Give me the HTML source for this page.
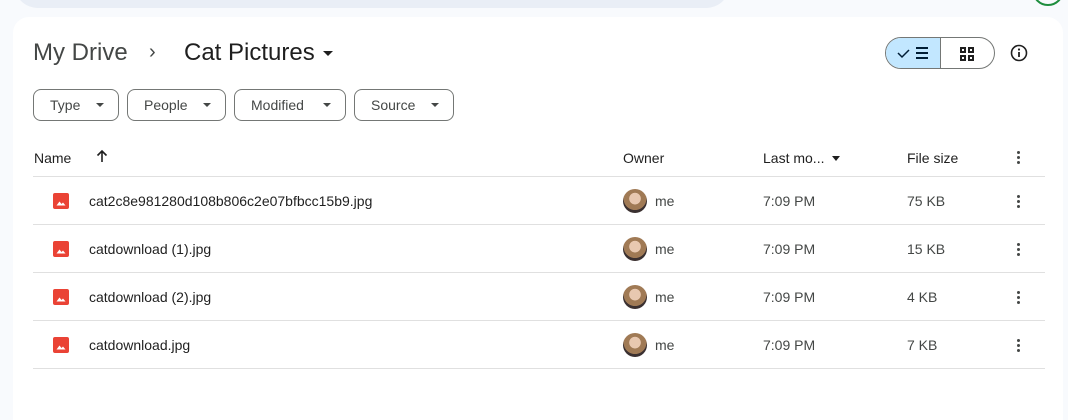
<!DOCTYPE html>
<html><head><style>
*{margin:0;padding:0;box-sizing:border-box}
html,body{width:1068px;height:420px;overflow:hidden}
body{background:#f8fafd;font-family:"Liberation Sans",Arial,sans-serif;position:relative;color:#1f1f1f}
.search{position:absolute;left:14px;top:-30px;width:716px;height:38px;background:#e9eef6;border-radius:0 0 24px 24px}
.av{position:absolute;left:1032px;top:-26px;width:32px;height:32px;border:2px solid #1e8e3e;border-radius:50%}
.card{position:absolute;left:13px;top:17px;width:1050px;height:420px;background:#fff;border-radius:16px}
.a{position:absolute}
.crumb{top:39px;font-size:24px;line-height:28px}
.chip{top:89px;height:32px;border:1px solid #747775;border-radius:8px;font-size:14px;color:#444746;line-height:30px;padding-left:16px}
.chip:after{content:"";position:absolute;right:14px;top:13px;border:4px solid transparent;border-top:4px solid #444746;border-bottom:0}
.hd{top:150px;font-size:14px;color:#1f1f1f}
.line{left:33px;width:1012px;height:1px;background:#e0e0e0}
.fn{font-size:14px;color:#1f1f1f}
.sm{font-size:14px;color:#444746}
.ow{width:24px;height:24px;border-radius:50%;background:radial-gradient(circle at 50% 40%,#e8c8b0 0 30%,#a07a55 32% 60%,#3a3030 62%)}
.dots{width:4px}
.dots i{display:block;width:3px;height:3px;background:#444746;border-radius:50%;margin-bottom:2px}
</style></head><body>
<div class="search"></div><div class="av"></div>
<div class="card"></div>
<div class="a crumb" style="left:33px;color:#444746">My Drive</div>
<div class="a" style="left:149px;top:41px;font-size:20px;color:#444746">›</div>
<div class="a crumb" style="left:184px">Cat Pictures</div>
<div class="a" style="left:323px;top:51px;border:5px solid transparent;border-top:5px solid #1f1f1f;border-bottom:0"></div>
<div class="a" style="left:885px;top:37px;width:110px;height:32px;border:1px solid #747775;border-radius:16px;overflow:hidden">
 <div style="position:absolute;left:0;top:0;width:55px;height:30px;background:#c2e7ff;border-right:1px solid #747775"></div>
 <svg style="position:absolute;left:10px;top:7px" width="36" height="16" viewBox="0 0 36 16"><path d="M2 8l4 4 7-7" fill="none" stroke="#001d35" stroke-width="1.5"/><path d="M20 3h12M20 8h12M20 13h12" stroke="#001d35" stroke-width="2"/></svg>
 <svg style="position:absolute;left:74px;top:9px" width="14" height="14" viewBox="0 0 14 14" fill="#1f1f1f"><rect x="0" y="0" width="6" height="6"/><rect x="8" y="0" width="6" height="6"/><rect x="0" y="8" width="6" height="6"/><rect x="8" y="8" width="6" height="6"/><g fill="#fff"><rect x="2" y="2" width="2" height="2"/><rect x="10" y="2" width="2" height="2"/><rect x="2" y="10" width="2" height="2"/><rect x="10" y="10" width="2" height="2"/></g></svg>
</div>
<svg class="a" style="left:1010px;top:44px" width="18" height="18" viewBox="0 0 18 18"><circle cx="9" cy="9" r="7.5" fill="none" stroke="#1f1f1f" stroke-width="1.6"/><path d="M9 8v5" stroke="#1f1f1f" stroke-width="1.8"/><circle cx="9" cy="5.5" r="1.1" fill="#1f1f1f"/></svg>
<div class="a chip" style="left:33px;width:86px">Type</div>
<div class="a chip" style="left:127px;width:99px">People</div>
<div class="a chip" style="left:234px;width:112px">Modified</div>
<div class="a chip" style="left:354px;width:100px">Source</div>
<div class="a hd" style="left:34px">Name</div>
<svg class="a" style="left:95px;top:149px" width="14" height="14" viewBox="0 0 14 14"><path d="M7 13V2M2.5 6.5L7 2l4.5 4.5" fill="none" stroke="#1f1f1f" stroke-width="1.6"/></svg>
<div class="a hd" style="left:623px">Owner</div>
<div class="a hd" style="left:763px">Last mo...</div>
<div class="a" style="left:832px;top:156px;border:4px solid transparent;border-top:5px solid #1f1f1f;border-bottom:0"></div>
<div class="a hd" style="left:907px">File size</div>
<div class="a dots" style="left:1017px;top:151px"><i></i><i></i><i></i></div>
<div class="a line" style="top:176px"></div>

<svg width="0" height="0" style="position:absolute"><defs><symbol id="img" viewBox="0 0 16 16"><rect width="16" height="16" rx="2" fill="#ea4335"/><path d="M3.5 12.5L6.5 8.5 8.5 11 10 9.5 12.5 12.5z" fill="#fff"/></symbol></defs></svg>

<svg class="a" style="left:53px;top:193px" width="16" height="16"><use href="#img"/></svg><div class="a fn" style="left:89px;top:193px">cat2c8e981280d108b806c2e07bfbcc15b9.jpg</div>
<div class="a ow" style="left:623px;top:189px"></div><div class="a sm" style="left:655px;top:193px">me</div>
<div class="a sm" style="left:763px;top:193px">7:09 PM</div><div class="a sm" style="left:907px;top:193px">75 KB</div>
<div class="a dots" style="left:1017px;top:195px"><i></i><i></i><i></i></div>
<div class="a line" style="top:224px"></div>

<svg class="a" style="left:53px;top:241px" width="16" height="16"><use href="#img"/></svg><div class="a fn" style="left:89px;top:241px">catdownload (1).jpg</div>
<div class="a ow" style="left:623px;top:237px"></div><div class="a sm" style="left:655px;top:241px">me</div>
<div class="a sm" style="left:763px;top:241px">7:09 PM</div><div class="a sm" style="left:907px;top:241px">15 KB</div>
<div class="a dots" style="left:1017px;top:243px"><i></i><i></i><i></i></div>
<div class="a line" style="top:272px"></div>

<svg class="a" style="left:53px;top:289px" width="16" height="16"><use href="#img"/></svg><div class="a fn" style="left:89px;top:289px">catdownload (2).jpg</div>
<div class="a ow" style="left:623px;top:285px"></div><div class="a sm" style="left:655px;top:289px">me</div>
<div class="a sm" style="left:763px;top:289px">7:09 PM</div><div class="a sm" style="left:907px;top:289px">4 KB</div>
<div class="a dots" style="left:1017px;top:291px"><i></i><i></i><i></i></div>
<div class="a line" style="top:320px"></div>

<svg class="a" style="left:53px;top:337px" width="16" height="16"><use href="#img"/></svg><div class="a fn" style="left:89px;top:337px">catdownload.jpg</div>
<div class="a ow" style="left:623px;top:333px"></div><div class="a sm" style="left:655px;top:337px">me</div>
<div class="a sm" style="left:763px;top:337px">7:09 PM</div><div class="a sm" style="left:907px;top:337px">7 KB</div>
<div class="a dots" style="left:1017px;top:339px"><i></i><i></i><i></i></div>
<div class="a line" style="top:368px"></div>
</body></html>
